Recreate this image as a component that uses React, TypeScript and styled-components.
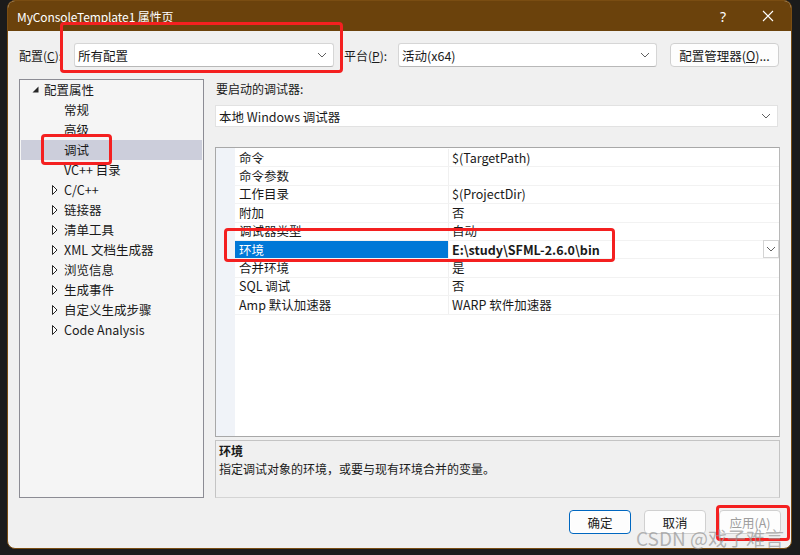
import React from "react";
import styled, { createGlobalStyle } from "styled-components";

const GlobalStyle = createGlobalStyle`
  html, body { margin: 0; padding: 0; background: #1b1b1b; }
  body {
    font-family: "Noto Sans CJK SC", "Noto Sans", "Liberation Sans", sans-serif;
    font-size: 12px;
    color: #1a1a1a;
  }
  * { box-sizing: border-box; }
`;

const Screen = styled.div`
  position: relative;
  width: 800px;
  height: 555px;
  background: #1b1b1b;
  padding: 0 9px 0 7px;
  overflow: hidden;
`;

const Window = styled.div`
  width: 785px;
  height: 549px;
  border: 1px solid #7a4d12;
  border-radius: 8px;
  overflow: hidden;
  background: #f0f0f0;
  display: flex;
  flex-direction: column;
`;

const TitleBar = styled.div`
  height: 30px;
  flex: none;
  background: #6b420c;
  display: flex;
  align-items: center;
  padding: 0 0 0 9px;
  color: #ffffff;
  font-size: 12px;
  letter-spacing: -0.1px;
`;

const TitleText = styled.div`
  flex: 1;
  padding-top: 1px;
`;

const TitleButton = styled.div<{ $w: number }>`
  width: ${(p) => p.$w}px;
  height: 30px;
  display: flex;
  align-items: center;
  justify-content: center;
  color: #ffffff;
  font-size: 14px;
  font-family: "Noto Sans", sans-serif;
`;

const Body = styled.div`
  flex: 1;
  display: flex;
  flex-direction: column;
  padding: 12px 11px 0 11px;
`;

const TopRow = styled.div`
  display: flex;
  align-items: center;
  height: 24px;
`;

const Label = styled.div<{ $w: number }>`
  width: ${(p) => p.$w}px;
  flex: none;
  font-size: 12px;
  white-space: nowrap;
`;

const U = styled.span`
  text-decoration: underline;
`;

const SelectBox = styled.div<{ $w?: number; $h?: number }>`
  width: ${(p) => (p.$w ? `${p.$w}px` : "auto")};
  flex: ${(p) => (p.$w ? "none" : "1")};
  height: ${(p) => p.$h ?? 24}px;
  background: #ffffff;
  border: 1px solid #d6d6d6;
  border-bottom-color: #b8b8b8;
  border-radius: 3px;
  display: flex;
  align-items: center;
  padding: 0 6px 0 3px;
  font-size: 12.5px;
`;

const SelectText = styled.div`
  flex: 1;
  white-space: nowrap;
`;

const Chevron = () => (
  <svg width="10" height="6" viewBox="0 0 10 6">
    <path d="M1 1 L5 5 L9 1" fill="none" stroke="#606060" strokeWidth="1" />
  </svg>
);

const PushButton = styled.div<{ $primary?: boolean; $disabled?: boolean; $w: number }>`
  width: ${(p) => p.$w}px;
  height: 24px;
  flex: none;
  background: #fdfdfd;
  border: 1px solid ${(p) => (p.$primary ? "#0067c0" : "#d0d0d0")};
  box-shadow: ${(p) => (p.$primary ? "inset 0 0 0 1px #ffffff" : "none")};
  border-radius: 4px;
  display: flex;
  align-items: center;
  justify-content: center;
  font-size: 12.5px;
  color: ${(p) => (p.$disabled ? "#9d9d9d" : "#1a1a1a")};
  white-space: nowrap;
`;

const Main = styled.div`
  margin-top: 12px;
  height: 419px;
  display: flex;
  gap: 11px;
`;

const Tree = styled.div`
  width: 185px;
  flex: none;
  background: #f5f5f5;
  border: 1px solid #8c8c94;
  padding: 0 1px 1px 1px;
  display: flex;
  flex-direction: column;
`;

const TreeRow = styled.div<{ $indent: number; $selected?: boolean }>`
  height: 20px;
  display: flex;
  align-items: center;
  padding-left: ${(p) => p.$indent}px;
  padding-bottom: 1px;
  background: ${(p) => (p.$selected ? "#cccedb" : "transparent")};
  font-size: 12.5px;
  white-space: nowrap;
`;

const Twisty = styled.div`
  width: 12px;
  flex: none;
  display: flex;
  align-items: center;
`;

const Expanded = () => (
  <svg width="7" height="7" viewBox="0 0 7 7">
    <path d="M6.5 0.5 L6.5 6.5 L0.5 6.5 Z" fill="#262626" />
  </svg>
);

const Collapsed = () => (
  <svg width="6" height="10" viewBox="0 0 6 10">
    <path d="M0.5 0.5 L5 5 L0.5 9.5 Z" fill="#ffffff" stroke="#262626" strokeWidth="1" />
  </svg>
);

const RightPane = styled.div`
  flex: 1;
  display: flex;
  flex-direction: column;
`;

const SectionLabel = styled.div`
  height: 18px;
  padding-left: 1px;
  display: flex;
  align-items: center;
  font-size: 12px;
`;

const DebuggerRow = styled.div`
  margin-top: 8px;
  margin-right: 2px;
  display: flex;
`;

const Grid = styled.div`
  margin-top: 20px;
  height: 290px;
  background: #ffffff;
  border: 1px solid #a8a8a8;
  border-right-color: #b8b8b8;
  display: flex;
`;

const Gutter = styled.div`
  width: 19px;
  flex: none;
  background: #f0f3f8;
`;

const Rows = styled.div`
  flex: 1;
  padding-top: 1px;
  display: flex;
  flex-direction: column;
`;

const GridRow = styled.div`
  height: 18.4px;
  display: flex;
  border-bottom: 1px solid #f2f2f2;
`;

const NameCell = styled.div<{ $selected?: boolean }>`
  width: 214px;
  flex: none;
  display: flex;
  align-items: center;
  padding-left: 4px;
  padding-bottom: 1px;
  border-right: 1px solid #f0f0f0;
  background: ${(p) => (p.$selected ? "#0078d7" : "transparent")};
  color: ${(p) => (p.$selected ? "#ffffff" : "#1a1a1a")};
  font-size: 12.5px;
  white-space: nowrap;
`;

const ValueCell = styled.div<{ $bold?: boolean }>`
  flex: 1;
  display: flex;
  align-items: center;
  padding-left: 3px;
  padding-bottom: 1px;
  font-size: 12.5px;
  font-weight: ${(p) => (p.$bold ? 700 : 400)};
  white-space: nowrap;
`;

const DropButton = styled.div`
  width: 16px;
  height: 18px;
  margin-left: auto;
  border: 1px solid #d4d4d4;
  background: #ffffff;
  display: flex;
  align-items: center;
  justify-content: center;
`;

const Desc = styled.div`
  margin-top: 3px;
  height: 58px;
  border: 1px solid #c4c4c4;
  border-bottom-color: #d4d4d4;
  background: #f0f0f0;
  padding: 1px 3px;
`;

const DescTitle = styled.div`
  font-weight: 700;
  font-size: 12px;
  line-height: 18px;
`;

const DescText = styled.div`
  font-size: 12px;
  line-height: 18px;
`;

const Footer = styled.div`
  margin-top: 12px;
  display: flex;
  justify-content: flex-end;
  gap: 13px;
`;

const Annotation = styled.div<{ $x: number; $y: number; $w: number; $h: number }>`
  position: absolute;
  left: ${(p) => p.$x}px;
  top: ${(p) => p.$y}px;
  width: ${(p) => p.$w}px;
  height: ${(p) => p.$h}px;
  border: 3px solid #f42020;
  border-radius: 4px;
  pointer-events: none;
`;

const Watermark = styled.div`
  position: absolute;
  left: 636px;
  top: 524px;
  font-size: 19px;
  color: rgba(150, 150, 150, 0.7);
  white-space: nowrap;
  pointer-events: none;
`;

const treeItems: { text: string; level: number; kind?: "expanded" | "collapsed"; selected?: boolean }[] = [
  { text: "配置属性", level: 0, kind: "expanded" },
  { text: "常规", level: 1 },
  { text: "高级", level: 1 },
  { text: "调试", level: 1, selected: true },
  { text: "VC++ 目录", level: 1 },
  { text: "C/C++", level: 1, kind: "collapsed" },
  { text: "链接器", level: 1, kind: "collapsed" },
  { text: "清单工具", level: 1, kind: "collapsed" },
  { text: "XML 文档生成器", level: 1, kind: "collapsed" },
  { text: "浏览信息", level: 1, kind: "collapsed" },
  { text: "生成事件", level: 1, kind: "collapsed" },
  { text: "自定义生成步骤", level: 1, kind: "collapsed" },
  { text: "Code Analysis", level: 1, kind: "collapsed" },
];

const props: { name: string; value: string; selected?: boolean }[] = [
  { name: "命令", value: "$(TargetPath)" },
  { name: "命令参数", value: "" },
  { name: "工作目录", value: "$(ProjectDir)" },
  { name: "附加", value: "否" },
  { name: "调试器类型", value: "自动" },
  { name: "环境", value: "E:\\study\\SFML-2.6.0\\bin", selected: true },
  { name: "合并环境", value: "是" },
  { name: "SQL 调试", value: "否" },
  { name: "Amp 默认加速器", value: "WARP 软件加速器" },
];

export default function App() {
  return (
    <>
      <GlobalStyle />
      <Screen>
        <Window>
          <TitleBar>
            <TitleText>MyConsoleTemplate1 属性页</TitleText>
            <TitleButton $w={44}>?</TitleButton>
            <TitleButton $w={46}>
              <svg width="12" height="12" viewBox="0 0 12 12">
                <path d="M1 1 L11 11 M11 1 L1 11" stroke="#ffffff" strokeWidth="1.1" />
              </svg>
            </TitleButton>
          </TitleBar>
          <Body>
            <TopRow>
              <Label $w={55}>
                配置(<U>C</U>):
              </Label>
              <SelectBox $w={260}>
                <SelectText>所有配置</SelectText>
                <Chevron />
              </SelectBox>
              <Label $w={54} style={{ marginLeft: 10 }}>
                平台(<U>P</U>):
              </Label>
              <SelectBox $w={259}>
                <SelectText>活动(x64)</SelectText>
                <Chevron />
              </SelectBox>
              <PushButton $w={109} style={{ marginLeft: 13 }}>
                配置管理器(<U>O</U>)...
              </PushButton>
            </TopRow>
            <Main>
              <Tree>
                {treeItems.map((t) => (
                  <TreeRow key={t.text} $indent={t.level === 0 ? 11 : 31} $selected={t.selected}>
                    <Twisty>
                      {t.kind === "expanded" && <Expanded />}
                      {t.kind === "collapsed" && <Collapsed />}
                    </Twisty>
                    {t.text}
                  </TreeRow>
                ))}
              </Tree>
              <RightPane>
                <SectionLabel>要启动的调试器:</SectionLabel>
                <DebuggerRow>
                  <SelectBox $h={22} style={{ borderRadius: 0, borderColor: "#e2e2e2" }}>
                    <SelectText>本地 Windows 调试器</SelectText>
                    <Chevron />
                  </SelectBox>
                </DebuggerRow>
                <Grid>
                  <Gutter />
                  <Rows>
                    {props.map((p) => (
                      <GridRow key={p.name}>
                        <NameCell $selected={p.selected}>{p.name}</NameCell>
                        <ValueCell $bold={p.selected}>
                          {p.value}
                          {p.selected && (
                            <DropButton>
                              <Chevron />
                            </DropButton>
                          )}
                        </ValueCell>
                      </GridRow>
                    ))}
                  </Rows>
                </Grid>
                <Desc>
                  <DescTitle>环境</DescTitle>
                  <DescText>指定调试对象的环境，或要与现有环境合并的变量。</DescText>
                </Desc>
              </RightPane>
            </Main>
            <Footer>
              <PushButton $w={62} $primary>
                确定
              </PushButton>
              <PushButton $w={62}>取消</PushButton>
              <PushButton $w={62} $disabled style={{ marginRight: -1 }}>
                应用(A)
              </PushButton>
            </Footer>
          </Body>
        </Window>
        <Annotation $x={60} $y={22} $w={283} $h={51} />
        <Annotation $x={41} $y={134} $w={71} $h={31} />
        <Annotation $x={224} $y={228} $w={391} $h={34} />
        <Annotation $x={716} $y={505} $w={74} $h={36} />
        <Watermark>CSDN @戏子难言</Watermark>
      </Screen>
    </>
  );
}
